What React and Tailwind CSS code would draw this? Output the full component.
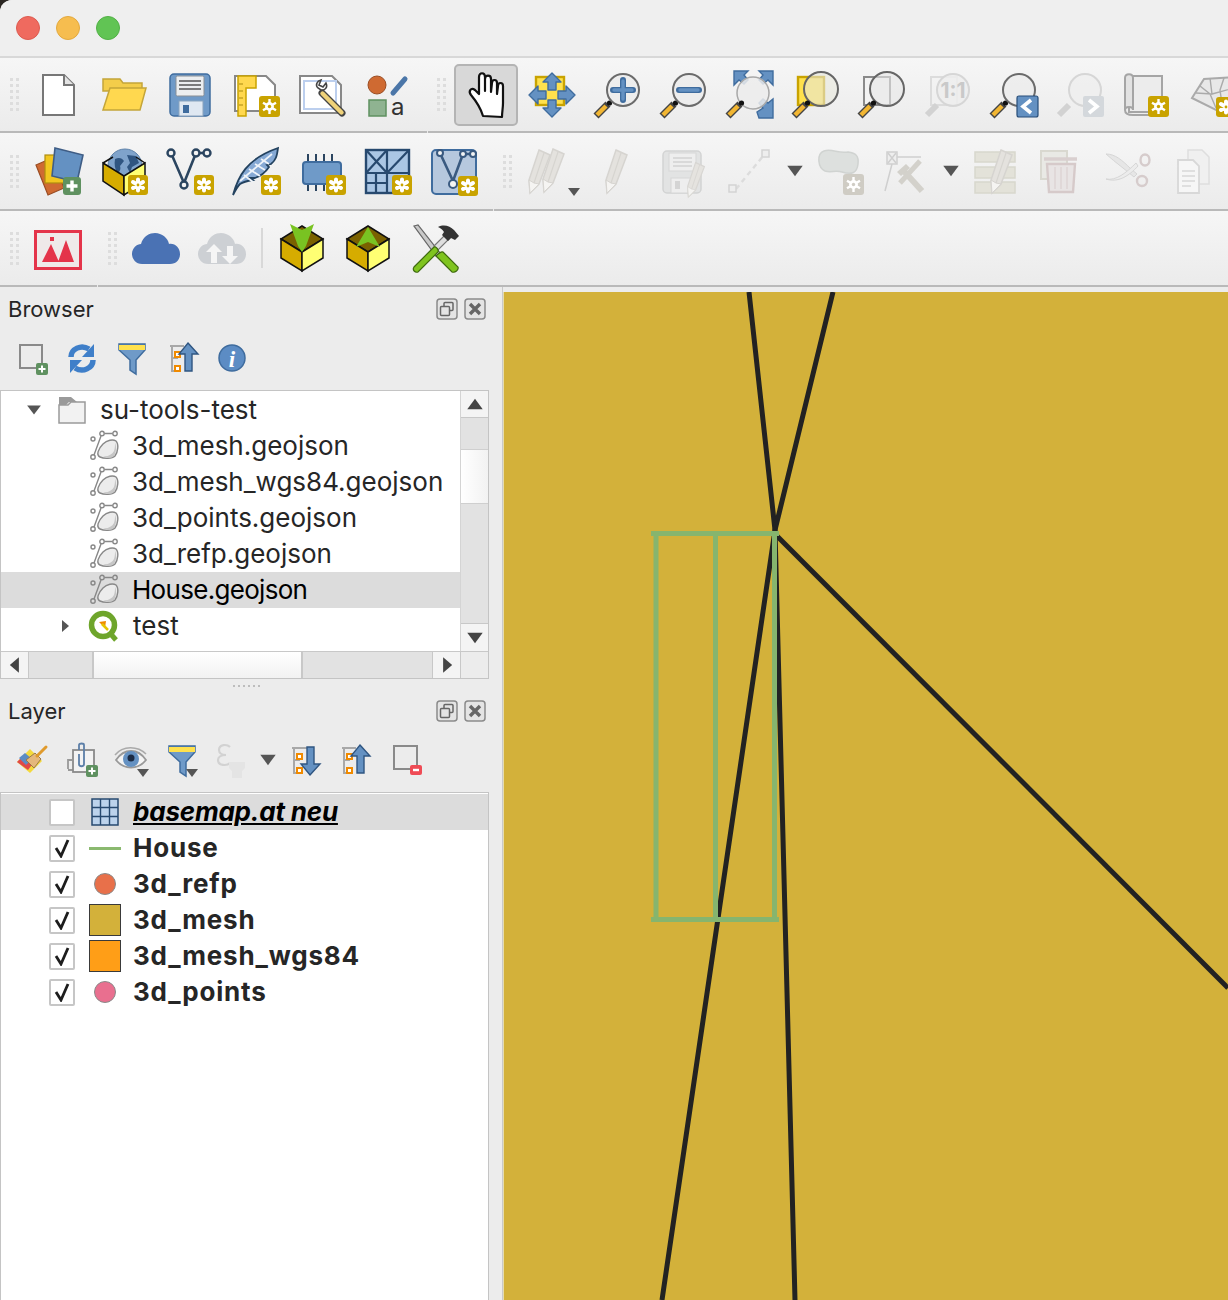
import React from "react";

const Svg = ({ children, size = 48, className = "" }) => (
  <svg width={size} height={size} viewBox={`0 0 ${size} ${size}`} className={`overflow-visible ${className}`}>
    {children}
  </svg>
);

// small badges
const StarBadge = ({ x = 27, y = 26, c = "#c9a300" }) => (
  <g transform={`translate(${x} ${y})`}>
    <rect width="20" height="20" rx="3" fill={c} />
    <g stroke="#fff" strokeWidth="4" strokeLinecap="round">
      <path d="M10 4.500v11M5 7l10 6M15 7L5 13" />
    </g>
    <circle cx="10" cy="10" r="1.400" fill={c} />
  </g>
);

const GearBadge = ({ x = 27, y = 26, c = "#c9a300" }) => (
  <g transform={`translate(${x} ${y})`}>
    <rect width="21" height="21" rx="3" fill={c} />
    <g stroke="#fff" strokeWidth="2.400">
      <path d="M10.500 3v15M4 6.700l13 7.500M17 6.700L4 14.200" />
    </g>
    <circle cx="10.500" cy="10.500" r="4.400" fill="#fff" />
    <circle cx="10.500" cy="10.500" r="1.700" fill={c} />
  </g>
);

const PlusBadge = ({ x = 27, y = 26 }) => (
  <g transform={`translate(${x} ${y})`}>
    <rect width="18" height="18" rx="3" fill="#5f9160" />
    <path d="M9 3.500v11M3.500 9h11" stroke="#fff" strokeWidth="3.400" />
  </g>
);

const Handle = () => (
  <g>
    <path d="M2 45l12-12" stroke="#444" strokeWidth="7" />
    <path d="M3 44l9-9" stroke="#f2b632" strokeWidth="4.400" />
    <circle cx="15.500" cy="32" r="2.600" fill="#111" />
  </g>
);

const Lens = ({ cx = 29, cy = 19, r = 16, fill = "#ececec", dim = false }) => (
  <g>
    {dim ? <path d="M3 44l10-10" stroke="#d2d2d2" strokeWidth="6" /> : <Handle />}
    <circle cx={cx} cy={cy} r={r} fill={fill} fillOpacity="0.85" stroke={dim ? "#d6d6d6" : "#6b6b6b"} strokeWidth="2" />
  </g>
);

const Arrow = ({ d = "down", size = 14, color = "#555" }) => {
  const pts = {
    down: "1,3 13,3 7,11",
    up: "1,11 13,11 7,3",
    left: "10,1 10,13 3,7",
    right: "4,1 4,13 11,7",
  };
  return (
    <svg width={size} height={size} viewBox="0 0 14 14">
      <polygon points={pts[d]} fill={color} />
    </svg>
  );
};

const Cube = ({ up }) => (
  <g>
    <path d="M24 2l21 13-21 13L3 15z" fill="#7a6100" stroke="#111" strokeWidth="1.500" />
    <path d="M3 15l21 13v19L3 34z" fill="#d6ac00" stroke="#111" strokeWidth="1.500" />
    <path d="M45 15L24 28v19l21-13z" fill="#ffff73" stroke="#111" strokeWidth="1.500" />
    {up ? (
      <path d="M24 3l12 20-12-5-12 5z" fill="#79c322" />
    ) : (
      <path d="M12 0l12 6 12-6-8 22-4 6-4-6z" fill="#79c322" />
    )}
  </g>
);

const GeoFile = () => (
  <Svg size={32}>
    <g fill="none" stroke="#888" strokeWidth="1.400">
      <circle cx="4" cy="27" r="2.200" />
      <circle cx="13" cy="3.500" r="2.200" />
      <circle cx="26" cy="3.500" r="2.200" />
      <circle cx="4" cy="9" r="2" />
      <path d="M5 25L12 6M15.500 3.500h8" />
    </g>
    <path d="M11 27c-4-2-2-8 3-13 4-4 10-5 13-3 3 3 2 11-1 15-3 3-11 3-15 1z" fill="#ececec" stroke="#888" strokeWidth="1.400" />
    <path d="M14 26c4 1 9-1 11-5 1-3 1-6 1-8 2 4 1 10-1 13-3 3-8 2-11 0z" fill="#c6c6c6" />
  </Svg>
);

const DockButtons = () => (
  <div className="flex gap-[6px]">
    <svg width="22" height="22" viewBox="0 0 22 22">
      <rect x="1" y="1" width="20" height="20" rx="3" fill="#e4e4e4" stroke="#8a8a8a" strokeWidth="1.500" />
      <rect x="8" y="4.500" width="9" height="8" rx="1" fill="none" stroke="#666" strokeWidth="1.500" />
      <rect x="4.500" y="8.500" width="9" height="9" rx="1" fill="#e4e4e4" stroke="#666" strokeWidth="1.500" />
    </svg>
    <svg width="22" height="22" viewBox="0 0 22 22">
      <rect x="1" y="1" width="20" height="20" rx="3" fill="#e4e4e4" stroke="#8a8a8a" strokeWidth="1.500" />
      <path d="M6 6l10 10M16 6L6 16" stroke="#666" strokeWidth="3.400" />
    </svg>
  </div>
);

const Grip = ({ className = "" }) => (
  <div className={`grid grid-cols-2 gap-x-[3px] gap-y-[3px] w-[9px] shrink-0 ${className}`}>
    {Array.from({ length: 12 }).map((_, i) => (
      <div key={i} className="w-[3px] h-[3px] bg-[#dddddd]" />
    ))}
  </div>
);

const Cell = ({ children, w = "w-[66px]" }) => (
  <div className={`${w} shrink-0 flex items-center justify-center`}>{children}</div>
);

const ToolbarLine = ({ at }) => (
  <div className="flex h-[2px]">
    <div className="bg-[#b9b9b9]" style={{ width: at }} />
    <div className="flex-1 ml-px bg-[#b9b9b9]" />
  </div>
);

// row 1 icons
const IconNew = () => (
  <Svg>
    <path d="M9 4h21l10 10v30H9z" fill="#fff" stroke="#777" strokeWidth="2" />
    <path d="M30 4v10h10" fill="#e4e4e4" stroke="#777" strokeWidth="2" />
  </Svg>
);
const IconOpen = () => (
  <Svg>
    <path d="M3 8h17l3 4h19v8H3z" fill="#f3cd4a" stroke="#c4a53a" strokeWidth="1.500" />
    <path d="M10 17h36l-6 22H3z" fill="#ffd84f" stroke="#c4a53a" strokeWidth="1.500" />
  </Svg>
);
const IconSave = () => (
  <Svg>
    <rect x="4" y="3" width="40" height="42" rx="4" fill="#6f9ac8" stroke="#3f6c9e" strokeWidth="1.500" />
    <rect x="10" y="5" width="28" height="20" rx="1.500" fill="#eceef0" stroke="#8a8f95" />
    <path d="M13 10h22M13 14h22M13 18h22" stroke="#555" strokeWidth="1.600" />
    <rect x="13" y="30" width="24" height="15" fill="#dfe8f2" stroke="#8aa3bd" />
    <rect x="17" y="34" width="6" height="8" fill="#3f6c9e" />
  </Svg>
);
const IconLayout = () => (
  <Svg>
    <path d="M3 5h31l9 9v26H3z" fill="#fff" stroke="#888" strokeWidth="2" />
    <path d="M6 5h18v12H14v28H6z" fill="#ffd84f" stroke="#c9a300" strokeWidth="1.500" />
    <path d="M7 13h4M7 20h4M7 27h4M7 34h4" stroke="#a98a10" strokeWidth="1.200" />
    <GearBadge x={27} y={25} />
  </Svg>
);
const IconManager = () => (
  <Svg>
    <path d="M2 5h32l9 9v28H2z" fill="#fff" stroke="#888" strokeWidth="2" />
    <rect x="6" y="10" width="32" height="28" fill="none" stroke="#bccfee" strokeWidth="2" />
    <path d="M20 17c-3-3-1-7 3-8l-2 5 4 2 3-4c2 4-1 8-5 7z" fill="#fff" stroke="#444" strokeWidth="1.600" />
    <path d="M24 22l20 20" stroke="#444" strokeWidth="7" strokeLinecap="round" />
    <path d="M24.500 22.500l19 19" stroke="#efd27a" strokeWidth="4.400" strokeLinecap="round" />
  </Svg>
);
const IconStyle = () => (
  <Svg>
    <circle cx="13" cy="14" r="9" fill="#cf6a32" stroke="#9a4d24" />
    <path d="M29 22l12-14" stroke="#4b76a8" strokeWidth="5" strokeLinecap="round" />
    <rect x="5" y="29" width="17" height="16" fill="#8fb391" stroke="#5f9160" strokeWidth="1.500" />
    <text x="27" y="44" fontSize="24" fill="#333" fontFamily="Inter, sans-serif">a</text>
  </Svg>
);
const IconHand = () => (
  <Svg>
    <path d="M21 45C19 38 14 30 9 24c-3-4 0-8 4-5l4 4V6c0-5 6-5 6 0v14V8c0-4.500 6-4.500 6 0v13l1-9c0-4 5-4 5 0v11l1-8c0-4 5-4 5 0v17c0 5-1 9-1 14z" fill="#fff" stroke="#111" strokeWidth="2.200" strokeLinejoin="round" />
  </Svg>
);
const IconPanSel = () => (
  <Svg>
    <rect x="8" y="6" width="28" height="28" fill="#ffe14d" stroke="#c9a300" strokeWidth="2.400" />
    <g fill="#6491c2" stroke="#3f6c9e" strokeWidth="1.400" strokeLinejoin="round">
      <path d="M24 2l9 9h-5v8h-8v-8h-5z" />
      <path d="M24 46l9-9h-5v-8h-8v8h-5z" />
      <path d="M1 24l9-9v5h8v8h-8v5z" />
      <path d="M47 24l-9-9v5h-8v8h8v5z" />
    </g>
  </Svg>
);
const IconZoomIn = () => (
  <Svg>
    <Lens />
    <path d="M29 9v20M19 19h20" stroke="#3f6c9e" strokeWidth="6" strokeLinecap="round" />
    <path d="M29 10v18M20 19h18" stroke="#6491c2" strokeWidth="3.400" strokeLinecap="round" />
  </Svg>
);
const IconZoomOut = () => (
  <Svg>
    <Lens />
    <path d="M19 19h20" stroke="#3f6c9e" strokeWidth="6" strokeLinecap="round" />
    <path d="M20 19h18" stroke="#6491c2" strokeWidth="3.400" strokeLinecap="round" />
  </Svg>
);
const IconZoomFull = () => (
  <Svg>
    <g fill="#6491c2" stroke="#3f6c9e" strokeWidth="1.400">
      <path d="M8 0h14l-4 4 4 5-4 4-5-4-5 5z" />
      <path d="M47 0H33l4 4-4 5 4 4 5-4 5 5z" />
      <path d="M47 47H33l-2-6 6-4-4-5 4-4 5 4 5-4z" />
    </g>
    <circle cx="27" cy="22" r="16" fill="#ececec" fillOpacity="0.85" stroke="#a8a8a8" strokeWidth="1.500" />
    <Handle />
  </Svg>
);
const IconZoomSel = () => (
  <Svg>
    <rect x="6" y="6" width="26" height="28" fill="#ffe14d" stroke="#c9a300" strokeWidth="2.400" />
    <circle cx="29" cy="18" r="17" fill="#e8e8dc" fillOpacity="0.6" stroke="#666" strokeWidth="2" />
    <Handle />
  </Svg>
);
const IconZoomLayer = () => (
  <Svg>
    <rect x="6" y="6" width="26" height="28" fill="#f2f2f2" stroke="#8a8a8a" strokeWidth="2" />
    <circle cx="29" cy="18" r="17" fill="#e8e8e8" fillOpacity="0.6" stroke="#666" strokeWidth="2" />
    <Handle />
  </Svg>
);
const IconZoom11 = () => (
  <Svg>
    <rect x="7" y="6" width="26" height="28" fill="none" stroke="#dcdcdc" strokeWidth="2" />
    <Lens cy={19} dim fill="#ededed" />
    <text x="29" y="27" textAnchor="middle" fontSize="21" fontWeight="700" fill="#c9c9c9" fontFamily="Inter, sans-serif">1:1</text>
  </Svg>
);
const IconZoomLast = () => (
  <Svg>
    <Lens />
    <rect x="27" y="25" width="21" height="21" rx="2" fill="#6491c2" stroke="#274d78" strokeWidth="1.200" />
    <path d="M41 29l-8 6.500 8 6.500" fill="none" stroke="#fff" strokeWidth="3.600" />
  </Svg>
);
const IconZoomNext = () => (
  <Svg>
    <Lens dim fill="#efefef" />
    <rect x="27" y="25" width="21" height="21" rx="2" fill="#d4d8dc" />
    <path d="M33 29l8 6.500-8 6.500" fill="none" stroke="#fff" strokeWidth="3.600" />
  </Svg>
);
const IconMapView = () => (
  <Svg>
    <path d="M7 5h33v36H7z" fill="#ececec" stroke="#a5a5a5" strokeWidth="2" />
    <path d="M3 7c0-5 8-5 8 0v32c0-4-8-4-8 0z" fill="#e2e2e2" stroke="#a5a5a5" strokeWidth="2" />
    <path d="M3 39c0 5 6 5 8 5h16" fill="none" stroke="#a5a5a5" strokeWidth="2" />
    <GearBadge x={26} y={25} />
  </Svg>
);
const Icon3DView = () => (
  <Svg>
    <path d="M4 27L16 8l30-2 2 26-18 8z" fill="#e8e8e8" stroke="#aaa" strokeWidth="2" />
    <path d="M12 15l10 8 6 14M22 7l2 16 22-6M36 7l-4 12 2 14M8 22l16 1" fill="none" stroke="#aaa" strokeWidth="1.400" />
    <StarBadge x={28} y={26} />
  </Svg>
);

// row 2 icons
const IconDataSource = () => (
  <Svg>
    <path d="M2 18l16-7 12 30-16 7z" fill="#cf6a32" stroke="#9a4d24" strokeWidth="1.200" />
    <rect x="11" y="8" width="20" height="28" fill="#f1c61f" stroke="#b08d10" strokeWidth="1.200" />
    <path d="M21 1l28 7-6 27-25-6z" fill="#6491c2" stroke="#3f5d85" strokeWidth="1.600" />
    <PlusBadge x={29} y={30} />
  </Svg>
);
const IconGeoPackage = () => (
  <Svg>
    <circle cx="25" cy="19" r="17" fill="#7fa3cb" stroke="#5f83aa" />
    <path d="M15 12c4-2 7-1 9 2l-4 5c1 3 0 6-3 7-2-4-3-9-2-14zM27 8l9 1 3 7-7 4-2 6-3-6 3-4z" fill="#2f5581" />
    <path d="M3 16l21 13v19L3 34z" fill="#d6ac00" stroke="#111" strokeWidth="1.500" />
    <path d="M45 16L24 29v19l21-13z" fill="#ffff73" stroke="#111" strokeWidth="1.500" />
    <path d="M3 16l10-6M45 16l-9-6" stroke="#111" strokeWidth="1.500" />
    <StarBadge x={28} y={28} />
  </Svg>
);
const IconShape = () => (
  <Svg>
    <path d="M5 6l13 30M18 36L30 6M30 6h10" stroke="#2b4560" strokeWidth="2.600" fill="none" />
    <g fill="#f4f4f4" stroke="#2b4560" strokeWidth="2.400">
      <circle cx="5" cy="6" r="3.500" />
      <circle cx="18" cy="38" r="3.500" />
      <circle cx="30" cy="6" r="3.500" />
      <circle cx="41" cy="6" r="3.500" />
    </g>
    <StarBadge x={28} y={28} />
  </Svg>
);
const IconFeather = () => (
  <Svg>
    <path d="M1 48C6 30 14 12 46 1c-1 8-2 12-7 16l-4 1 2 2c-4 6-8 9-14 11l-5 0 3 2c-6 1-10 2-13 4-3 3-5 7-7 11z" fill="#86a9d4" stroke="#23425f" strokeWidth="1.800" />
    <path d="M8 34L40 7M12 28l9 7M17 22l11 7M23 17l10 6M29 12l8 5" stroke="#eef3f9" strokeWidth="1.800" fill="none" />
    <StarBadge x={29} y={28} />
  </Svg>
);
const IconChip = () => (
  <Svg>
    <path d="M10 7v10M18 7v10M26 7v10M34 7v10M10 35v9M18 35v9M26 35v9" stroke="#2b4560" strokeWidth="2" />
    <rect x="5" y="15" width="38" height="22" rx="3" fill="#6f9ac8" stroke="#3f6c9e" strokeWidth="2" />
    <StarBadge x={28} y={28} />
  </Svg>
);
const IconMesh = () => (
  <Svg>
    <rect x="2" y="3" width="43" height="43" fill="#aac6e4" stroke="#27496f" strokeWidth="2.400" />
    <path d="M2 26h43M23 3v43M2 3l21 23M23 3L2 26M45 3L23 26M2 36h21M12 26v20" stroke="#27496f" strokeWidth="2.200" fill="none" />
    <StarBadge x={28} y={28} />
  </Svg>
);
const IconVirtual = () => (
  <Svg>
    <rect x="2" y="3" width="44" height="44" rx="4" fill="#b6c8de" stroke="#3f6c9e" strokeWidth="2" />
    <path d="M10 6l13 28M23 34L33 7M33 7h9" stroke="#3a5a80" strokeWidth="2.600" fill="none" />
    <g fill="#f4f4f4" stroke="#3a5a80" strokeWidth="2">
      <circle cx="23" cy="37" r="4" />
      <circle cx="33" cy="7" r="3" />
      <circle cx="43" cy="7" r="3" />
      <circle cx="10" cy="6" r="3" />
    </g>
    <StarBadge x={28} y={29} />
  </Svg>
);
const Pencil = ({ t = "" }) => (
  <g transform={t}>
    <path d="M12 2l11 5L12 36 3 45l-1-13z" fill="#e4e2de" stroke="#d6d4d0" strokeWidth="1.500" />
    <path d="M2 32l5 3 5 1-9 9z" fill="#f5f4f2" stroke="#d6d4d0" />
    <path d="M7 35L17 5" stroke="#d6d4d0" strokeWidth="1.200" />
  </g>
);
const IconEdits = () => (
  <Svg>
    <Pencil t="translate(-1 1)" />
    <Pencil t="translate(13 0)" />
  </Svg>
);
const IconToggleEdit = () => (
  <Svg>
    <Pencil t="translate(10 1)" />
  </Svg>
);
const IconSaveEdits = () => (
  <Svg className="opacity-90">
    <rect x="3" y="4" width="38" height="42" rx="4" fill="#e1e2e2" stroke="#d0d1d1" strokeWidth="1.500" />
    <rect x="9" y="6" width="27" height="18" fill="#eeeeee" stroke="#d4d4d4" />
    <path d="M13 11h19M13 15h19M13 19h19" stroke="#d0d0d0" strokeWidth="1.500" />
    <rect x="11" y="31" width="20" height="15" fill="#eeeeee" stroke="#d4d4d4" />
    <rect x="15" y="34" width="5" height="8" fill="#d2d2d2" />
    <Pencil t="translate(26 14) scale(0.8)" />
  </Svg>
);
const IconDigitize = () => (
  <Svg>
    <path d="M10 42L38 8" stroke="#dcdcdc" strokeWidth="2.400" strokeDasharray="5 4" />
    <rect x="3" y="38" width="7" height="7" fill="#eee" stroke="#d4d4d4" strokeWidth="1.500" />
    <rect x="36" y="3" width="7" height="7" fill="#eee" stroke="#d4d4d4" strokeWidth="1.500" />
  </Svg>
);
const IconPolygon = () => (
  <Svg>
    <path d="M8 4c8-3 14 3 24 1 8 1 11 4 10 12-1 9-6 11-16 8-7-2-11 1-17-1C2 21 0 7 8 4z" fill="#dde0de" stroke="#d0d3d1" strokeWidth="1.500" />
    <GearBadge x={27} y={27} c="#cfccc4" />
  </Svg>
);
const IconVertex = () => (
  <Svg>
    <rect x="5" y="5" width="10" height="12" fill="#eee" stroke="#cfcfcf" strokeWidth="1.500" />
    <path d="M6 6l8 10M14 6L6 16M15 10h24M10 17L3 44" stroke="#cfcfcf" strokeWidth="1.500" fill="none" />
    <path d="M18 36l20-22" stroke="#d3d1cb" strokeWidth="5" />
    <path d="M20 22l20 22" stroke="#d3d1cb" strokeWidth="6" />
    <path d="M15 25l9-8 4 4-9 8z" fill="#d3d1cb" />
  </Svg>
);
const IconAttrs = () => (
  <Svg>
    <g fill="#e3e2d9" stroke="#d8d7cd" strokeWidth="1.500">
      <rect x="3" y="5" width="40" height="10" />
      <rect x="3" y="20" width="40" height="11" />
      <rect x="3" y="35" width="40" height="11" />
    </g>
    <Pencil t="translate(17 1)" />
  </Svg>
);
const IconDelete = () => (
  <Svg>
    <rect x="3" y="4" width="26" height="28" fill="#e9e9e5" stroke="#d9d8d0" strokeWidth="2" />
    <path d="M6 12h33" stroke="#d9cfcf" strokeWidth="3.500" />
    <path d="M9 17h28l-2 28H11z" fill="#e8e4e4" stroke="#d6caca" strokeWidth="2.400" />
    <path d="M17 20v22M23 20v22M29 20v22" stroke="#ddd3d3" strokeWidth="1.500" />
  </Svg>
);
const IconCut = () => (
  <Svg>
    <path d="M2 7c9 0 16 6 25 15l6 5-3 3C22 23 12 16 2 7z" fill="#e6e6e6" stroke="#d6d6d6" />
    <path d="M2 32c10 2 20-6 30-16l2 3C25 29 14 36 2 32z" fill="#ececec" stroke="#d6d6d6" />
    <ellipse cx="41" cy="13" rx="4.500" ry="5.500" fill="none" stroke="#d6cccc" strokeWidth="2.400" />
    <ellipse cx="38" cy="34" rx="5" ry="5" fill="none" stroke="#d6cccc" strokeWidth="2.400" />
  </Svg>
);
const IconCopy = () => (
  <Svg>
    <path d="M18 3h14l7 7v27H18z" fill="#f0f0f0" stroke="#dedede" strokeWidth="1.500" />
    <path d="M8 13h15l6 6v27H8z" fill="#f6f6f6" stroke="#d8d8d8" strokeWidth="1.800" />
    <path d="M12 24h13M12 29h13M12 34h13M12 39h9" stroke="#d8d8d8" strokeWidth="1.500" />
  </Svg>
);

// row 3 icons
const IconElevation = () => (
  <Svg>
    <rect x="1.500" y="7.500" width="45" height="37" fill="#efe9e9" stroke="#e4344a" strokeWidth="3" />
    <path d="M8 38l9-18 8 18zM24 38l8-22 8 22z" fill="#e4344a" />
    <rect x="16" y="13" width="4" height="4" fill="#e4344a" />
  </Svg>
);
const IconCloud = ({ fill = "#4a72b4" }) => (
  <Svg>
    <path d="M10 40C4 40 0 35 0 30c0-6 5-10 9-10 2-8 9-11 14-11 7 0 13 5 14 11 6-1 11 4 11 10 0 6-4 10-10 10z" fill={fill} />
  </Svg>
);
const IconCloudSync = () => (
  <Svg>
    <path d="M10 40C4 40 0 35 0 30c0-6 5-10 9-10 2-8 9-11 14-11 7 0 13 5 14 11 6-1 11 4 11 10 0 6-4 10-10 10z" fill="#cdd0d4" />
    <path d="M16 20l8 8h-5v11h-6V28H8z" fill="#f5f5f5" />
    <path d="M32 40l8-8h-5V22h-6v10h-5z" fill="#f5f5f5" />
  </Svg>
);
const IconTools = () => (
  <Svg>
    <path d="M4 2l4-1 22 28-4 3z" fill="#c9c9c9" stroke="#666" strokeWidth="1.200" />
    <path d="M26 32c3-3 5-5 7-4l15 15c1 3-3 6-6 5L27 33z" fill="#7fc41f" stroke="#3f6a10" strokeWidth="1.200" />
    <path d="M24 22L38 8l4 4-14 14z" fill="#dedede" stroke="#777" strokeWidth="1.200" />
    <path d="M28 3c6-3 12-1 16 3l5 6-4 4-4-2-3 3-6-6 2-3c-2-3-4-4-6-5z" fill="#333" />
    <path d="M24 23L4 43c-2 3 1 6 4 5l20-20c1-2-2-6-4-5z" fill="#7fc41f" stroke="#3f6a10" strokeWidth="1.200" />
  </Svg>
);

// panel toolbar icons, 36 box
const PanelIcon = ({ children }) => (
  <svg width="36" height="36" viewBox="0 0 36 36" className="overflow-visible">
    {children}
  </svg>
);
const INewFolder = () => (
  <PanelIcon>
    <rect x="6" y="5" width="22" height="23" fill="none" stroke="#8a8a8a" strokeWidth="2" />
    <rect x="22" y="23" width="12" height="12" rx="2" fill="#5f9160" />
    <path d="M28 25.500v7M24.500 29h7" stroke="#fff" strokeWidth="2" />
  </PanelIcon>
);
const IRefresh = () => (
  <PanelIcon>
    <path d="M7 17c0-8 10-13 18-8" fill="none" stroke="#3f7fc9" strokeWidth="5.500" />
    <path d="M30 4v13H18z" fill="#3f7fc9" />
    <path d="M29 20c0 8-10 13-18 8" fill="none" stroke="#3f7fc9" strokeWidth="5.500" />
    <path d="M6 33V20h12z" fill="#3f7fc9" />
  </PanelIcon>
);
const IFilter = () => (
  <PanelIcon>
    <path d="M5 4h26v6L22 20v14l-6-4V20L5 10z" fill="#6f9ac8" stroke="#3f6c9e" strokeWidth="1.500" />
    <path d="M5 5h26v5H5z" fill="#ffe14d" />
  </PanelIcon>
);
const ICollapse = () => (
  <PanelIcon>
    <path d="M6 6h14M8 6v26M8 18h6M8 31h6" fill="none" stroke="#a8a8a8" strokeWidth="2" />
    <rect x="11" y="12" width="5" height="5" fill="#fff" stroke="#f08a00" strokeWidth="2" />
    <rect x="11" y="26" width="5" height="5" fill="#fff" stroke="#f08a00" strokeWidth="2" />
    <path d="M24 3l10 11h-6v17h-7V14h-6z" fill="#6491c2" stroke="#2f5581" strokeWidth="1.400" />
  </PanelIcon>
);
const IExpand = () => (
  <PanelIcon>
    <path d="M6 6h22M8 6v26M8 18h6M8 31h6" fill="none" stroke="#a8a8a8" strokeWidth="2" />
    <rect x="11" y="12" width="5" height="5" fill="#fff" stroke="#f08a00" strokeWidth="2" />
    <rect x="11" y="26" width="5" height="5" fill="#fff" stroke="#f08a00" strokeWidth="2" />
    <path d="M24 33l10-11h-6V5h-7v17h-6z" fill="#6491c2" stroke="#2f5581" strokeWidth="1.400" />
  </PanelIcon>
);
const IInfo = () => (
  <PanelIcon>
    <circle cx="18" cy="18" r="13" fill="#5c8cc4" stroke="#3f6c9e" strokeWidth="1.500" />
    <text x="18" y="27" textAnchor="middle" fontSize="23" fontWeight="700" fontStyle="italic" fontFamily="'Liberation Serif', serif" fill="#fff">i</text>
  </PanelIcon>
);
const IBrush = () => (
  <PanelIcon>
    <path d="M3 20L16 7l12 12-12 12z" fill="#f4d93c" />
    <path d="M3 20l6-6 11 6-6 8z" fill="#e04848" />
    <path d="M5 16l6-5 7 6-6 6z" fill="#5c8cc4" />
    <path d="M12 18l9-7 6 6-7 9z" fill="#e4b77c" stroke="#9a7a48" />
    <path d="M23 14l9-9" stroke="#e09a2c" strokeWidth="3" strokeLinecap="round" />
  </PanelIcon>
);
const IAddGroup = () => (
  <PanelIcon>
    <path d="M4 27v-9h4M4 28h8" fill="none" stroke="#999" strokeWidth="1.800" />
    <rect x="9" y="8" width="21" height="22" fill="#f3f3f3" stroke="#8a8a8a" strokeWidth="1.800" />
    <path d="M15 8V3c0-2 5-2 5 0v19c0 3-5 3-5 0V12" fill="none" stroke="#5c7fa8" strokeWidth="1.800" />
    <rect x="22" y="23" width="12" height="12" rx="2" fill="#5f9160" />
    <path d="M28 25.500v7M24.500 29h7" stroke="#fff" strokeWidth="2" />
  </PanelIcon>
);
const IEye = () => (
  <PanelIcon>
    <path d="M2 18c8-12 22-12 30 0-8 10-22 10-30 0z" fill="#f4f4f4" stroke="#999" strokeWidth="1.800" />
    <path d="M1 13C9 3 24 4 32 12" fill="none" stroke="#aaa" strokeWidth="1.500" />
    <circle cx="17" cy="17" r="8" fill="#6491c2" />
    <circle cx="17" cy="16" r="3.500" fill="#1b2b44" />
  </PanelIcon>
);
const IExprFilter = () => (
  <PanelIcon>
    <path d="M16 5c-3-3-11-3-11 3 0 3 3 5 7 5-5 0-8 2-8 5 0 6 9 6 12 3" fill="none" stroke="#d2d2d2" strokeWidth="2.200" />
    <path d="M15 20h16v6l-3 3v7h-10v-7l-3-3z" fill="#e4e4e4" />
  </PanelIcon>
);
const IRemove = () => (
  <PanelIcon>
    <rect x="5" y="4" width="23" height="23" fill="none" stroke="#8a8a8a" strokeWidth="2" />
    <rect x="21" y="23" width="12" height="10" rx="2" fill="#ef4b55" />
    <path d="M24 28h6" stroke="#fff" strokeWidth="2.400" />
  </PanelIcon>
);
const IRaster = () => (
  <svg width="28" height="28" viewBox="0 0 28 28">
    <rect x="1" y="1" width="26" height="26" fill="#bcd3ec" stroke="#27496f" strokeWidth="1.500" />
    <path d="M1 9.500h26M1 18.500h26M9.500 1v26M18.500 1v26" stroke="#27496f" strokeWidth="1.400" />
  </svg>
);
const IQgis = () => (
  <svg width="32" height="32" viewBox="0 0 32 32">
    <circle cx="15" cy="15" r="11.500" fill="none" stroke="#6ea52b" strokeWidth="5.500" />
    <path d="M21 22l7 8" stroke="#6ea52b" strokeWidth="5" />
    <path d="M11 12l7-1-1 7z" fill="#f08a00" />
    <path d="M14 14l6 6" stroke="#e6c400" strokeWidth="2.500" />
  </svg>
);
const IFolder = () => (
  <svg width="28" height="28" viewBox="0 0 28 28">
    <path d="M1 1h12l6 5h-8l-3 3H1z" fill="#9a9a9a" />
    <path d="M1 9h9l3-3h14v21H1z" fill="#f2f2f2" stroke="#9a9a9a" strokeWidth="1.500" />
  </svg>
);

const TOOL_FONT = "font-[Inter,'Noto_Sans',sans-serif]";

const BrowserRow = ({ name, active }) => (
  <div className={`flex items-center h-9 pl-[88px] ${active ? "bg-[#dcdcdc]" : ""}`}>
    <GeoFile />
    <span className={`ml-[11px] text-[26px] leading-9 whitespace-nowrap ${active ? "text-black tracking-[-0.7px]" : "text-[#262626]"}`}>{name}</span>
  </div>
);

const Check = ({ on }) => (
  <div className="w-[26px] h-[27px] bg-white border-2 border-[#c6c6c6] rounded-[2px] flex items-center justify-center shrink-0">
    {on && (
      <svg width="19" height="20" viewBox="0 0 19 20">
        <path d="M3 10l5 8 7-16" fill="none" stroke="#1d1d1d" strokeWidth="2.800" />
      </svg>
    )}
  </div>
);

const LayerRow = ({ on = true, symbol, name, selected }) => (
  <div className={`flex items-center h-9 pl-[48px] ${selected ? "bg-[#dcdcdc]" : ""}`}>
    <Check on={on} />
    <div className="w-[32px] h-[32px] ml-[14px] flex items-center justify-center shrink-0">{symbol}</div>
    <span className={`ml-[12px] text-[26px] leading-9 font-bold whitespace-nowrap ${selected ? "italic underline text-black tracking-[-0.2px]" : "text-[#262626] tracking-[0.8px]"}`}>
      {name}
    </span>
  </div>
);

const Dot = ({ color }) => (
  <div className="w-[22px] h-[22px] rounded-full border border-[#8a8a8a]" style={{ backgroundColor: color }} />
);
const Swatch = ({ color }) => (
  <div className="w-[32px] h-[32px] border border-[#3a3a3a]" style={{ backgroundColor: color }} />
);

const files = ["3d_mesh.geojson", "3d_mesh_wgs84.geojson", "3d_points.geojson", "3d_refp.geojson"];

export default function App() {
  return (
    <div className={`w-[1228px] h-[1300px] overflow-hidden bg-[#2a2622] ${TOOL_FONT}`}>
      <div className="h-full rounded-tl-[12px] overflow-hidden bg-[#ececec] flex flex-col">
        {/* title bar */}
        <div className="h-[58px] shrink-0 bg-[#efefef] border-b-2 border-[#d8d8d8] flex items-center gap-4 pl-4 pb-px">
          <div className="w-6 h-6 rounded-full bg-[#ef6a5f] border border-[#dd5b50]" />
          <div className="w-6 h-6 rounded-full bg-[#f6bd4f] border border-[#e3a93e]" />
          <div className="w-6 h-6 rounded-full bg-[#61c454] border border-[#52b146]" />
        </div>

        {/* toolbar 1 */}
        <div className="shrink-0 bg-gradient-to-b from-[#f6f6f6] to-[#ebebeb]">
          <div className="h-[73px] flex items-center">
            <Grip className="ml-[10px] mr-[6px]" />
            <Cell><IconNew /></Cell>
            <Cell><IconOpen /></Cell>
            <Cell><IconSave /></Cell>
            <Cell><IconLayout /></Cell>
            <Cell><IconManager /></Cell>
            <Cell><IconStyle /></Cell>
            <Grip className="ml-[16px] mr-[8px]" />
            <div className="w-[64px] h-[62px] shrink-0 flex items-center justify-center bg-[#d8d8d8] border-2 border-[#b4b4b4] rounded-[5px]">
              <IconHand />
            </div>
            <div className="flex ml-px">
              <Cell><IconPanSel /></Cell>
              <Cell><IconZoomIn /></Cell>
              <Cell><IconZoomOut /></Cell>
              <Cell><IconZoomFull /></Cell>
              <Cell><IconZoomSel /></Cell>
              <Cell><IconZoomLayer /></Cell>
              <Cell><IconZoom11 /></Cell>
              <Cell><IconZoomLast /></Cell>
              <Cell><IconZoomNext /></Cell>
              <Cell><IconMapView /></Cell>
              <Cell><Icon3DView /></Cell>
            </div>
          </div>
          <ToolbarLine at={427} />
        </div>

        {/* toolbar 2 */}
        <div className="shrink-0 bg-gradient-to-b from-[#f6f6f6] to-[#ebebeb]">
          <div className="h-[76px] flex items-center">
            <Grip className="ml-[10px] mr-[6px]" />
            <Cell><IconDataSource /></Cell>
            <Cell><IconGeoPackage /></Cell>
            <Cell><IconShape /></Cell>
            <Cell><IconFeather /></Cell>
            <Cell><IconChip /></Cell>
            <Cell><IconMesh /></Cell>
            <Cell><IconVirtual /></Cell>
            <Grip className="ml-[16px] mr-[7px]" />
            <div className="w-[66px] shrink-0 relative flex items-center justify-center">
              <IconEdits />
              <div className="absolute left-[48px] top-[38px]"><Arrow /></div>
            </div>
            <Cell><IconToggleEdit /></Cell>
            <Cell><IconSaveEdits /></Cell>
            <Cell><IconDigitize /></Cell>
            <Cell w="w-[24px]"><Arrow size={18} /></Cell>
            <Cell><IconPolygon /></Cell>
            <Cell><IconVertex /></Cell>
            <Cell w="w-[24px]"><Arrow size={18} /></Cell>
            <Cell><IconAttrs /></Cell>
            <Cell><IconDelete /></Cell>
            <Cell><IconCut /></Cell>
            <Cell><IconCopy /></Cell>
          </div>
          <ToolbarLine at={493} />
        </div>

        {/* toolbar 3 */}
        <div className="shrink-0 bg-gradient-to-b from-[#f6f6f6] to-[#ebebeb]">
          <div className="h-[74px] flex items-center">
            <Grip className="ml-[10px] mr-[6px]" />
            <Cell><IconElevation /></Cell>
            <Grip className="ml-[17px] mr-[15px]" />
            <Cell w="w-[48px]"><IconCloud /></Cell>
            <div className="w-[18px] shrink-0" />
            <Cell w="w-[48px]"><IconCloudSync /></Cell>
            <div className="w-[2px] h-[40px] ml-[15px] mr-[6px] bg-[#d8d8d8] shrink-0" />
            <Cell><Svg><Cube /></Svg></Cell>
            <Cell><Svg><Cube up /></Svg></Cell>
            <Cell><IconTools /></Cell>
          </div>
          <ToolbarLine at={97} />
        </div>

        <div className="flex-1 flex min-h-0">
          {/* left docks */}
          <div className="w-[502px] shrink-0 flex flex-col border-r border-[#c9c9c9] box-content">
            <div className="w-[489px] flex-1 flex flex-col min-h-0">
              <div className="h-[44px] shrink-0 flex items-center justify-between pl-2 pr-[3px]">
                <span className="text-[22px] text-[#262626]">Browser</span>
                <DockButtons />
              </div>
              <div className="h-[54px] mb-[5px] shrink-0 flex items-center pl-[14px] gap-[14px]">
                <INewFolder />
                <IRefresh />
                <IFilter />
                <ICollapse />
                <IInfo />
              </div>

              <div className="h-[289px] shrink-0 border border-[#c4c4c4] bg-white flex flex-col">
                <div className="flex-1 flex min-h-0">
                  <div className="flex-1 pt-px min-w-0">
                    <div className="flex items-center h-9 pl-[25px]">
                      <Arrow size={16} />
                      <div className="ml-[16px] shrink-0"><IFolder /></div>
                      <span className="ml-[14px] text-[26px] leading-9 text-[#262626]">su-tools-test</span>
                    </div>
                    {files.map((f) => (
                      <BrowserRow key={f} name={f} />
                    ))}
                    <BrowserRow name="House.geojson" active />
                    <div className="flex items-center h-9 pl-[57px]">
                      <Arrow d="right" size={14} />
                      <div className="ml-[16px] shrink-0"><IQgis /></div>
                      <span className="ml-[13px] text-[26px] leading-9 text-[#262626]">test</span>
                    </div>
                  </div>
                  {/* vertical scrollbar */}
                  <div className="w-[28px] shrink-0 flex flex-col border-l border-[#d4d4d4]">
                    <div className="h-[27px] flex items-center justify-center bg-[#f4f4f4] border-b border-[#c8c8c8]"><Arrow d="up" size={18} color="#444" /></div>
                    <div className="h-[32px] bg-[#e2e2e2] border-b border-[#cfcfcf]" />
                    <div className="h-[53px] bg-gradient-to-r from-white to-[#f2f2f2]" />
                    <div className="flex-1 bg-[#e2e2e2] border-t border-[#cfcfcf]" />
                    <div className="h-[28px] flex items-center justify-center bg-[#f4f4f4] border-t border-[#c8c8c8]"><Arrow d="down" size={18} color="#444" /></div>
                  </div>
                </div>
                {/* horizontal scrollbar */}
                <div className="h-[27px] shrink-0 flex border-t border-[#c8c8c8]">
                  <div className="w-[28px] flex items-center justify-center bg-[#f4f4f4] border-r border-[#c8c8c8]"><Arrow d="left" size={18} color="#444" /></div>
                  <div className="w-[65px] bg-[#e2e2e2] border-r-2 border-[#c8c8c8]" />
                  <div className="w-[207px] bg-gradient-to-b from-white to-[#f2f2f2]" />
                  <div className="flex-1 bg-[#e2e2e2] border-l-2 border-[#c8c8c8]" />
                  <div className="w-[28px] flex items-center justify-center bg-[#f4f4f4] border-l border-[#c8c8c8]"><Arrow d="right" size={18} color="#444" /></div>
                  <div className="w-[28px] bg-[#ececec] border-l border-[#c8c8c8]" />
                </div>
              </div>

              {/* splitter */}
              <div className="h-[13px] shrink-0 flex items-center justify-center gap-[3px] pl-[3px]">
                {Array.from({ length: 6 }).map((_, i) => (
                  <div key={i} className="w-[2px] h-[2px] bg-[#bdbdbd]" />
                ))}
              </div>

              <div className="h-[38px] shrink-0 flex items-center justify-between pl-2 pr-[3px]">
                <span className="text-[22px] text-[#262626]">Layer</span>
                <DockButtons />
              </div>
              <div className="h-[60px] mb-[2px] shrink-0 flex items-center pl-[14px]">
                <IBrush />
                <div className="ml-[14px]"><IAddGroup /></div>
                <div className="ml-[14px] relative">
                  <IEye />
                  <div className="absolute left-[22px] top-[24px]"><Arrow size={14} /></div>
                </div>
                <div className="ml-[14px] relative">
                  <IFilter />
                  <div className="absolute left-[21px] top-[24px]"><Arrow size={14} /></div>
                </div>
                <div className="ml-[14px]"><IExprFilter /></div>
                <div className="ml-[9px] w-[18px] flex justify-center"><Arrow size={18} /></div>
                <div className="ml-[9px]"><IExpand /></div>
                <div className="ml-[14px]"><ICollapse /></div>
                <div className="ml-[17px]"><IRemove /></div>
              </div>

              <div className="flex-1 border-x border-t border-[#c4c4c4] bg-white pt-px min-h-0">
                <LayerRow on={false} selected symbol={<IRaster />} name="basemap.at neu" />
                <LayerRow symbol={<div className="w-[32px] h-[3px] bg-[#8ab96f]" />} name="House" />
                <LayerRow symbol={<Dot color="#e8704a" />} name="3d_refp" />
                <LayerRow symbol={<Swatch color="#d3b13a" />} name="3d_mesh" />
                <LayerRow symbol={<Swatch color="#ff9e17" />} name="3d_mesh_wgs84" />
                <LayerRow symbol={<Dot color="#e96f8f" />} name="3d_points" />
              </div>
            </div>
          </div>

          {/* map canvas */}
          <div className="flex-1 min-w-0 pt-[5px]">
            <div className="h-full bg-[#d3b13a] border-l border-[#e6dcae]">
              <svg width="724" height="1008" viewBox="0 0 724 1008" className="block">
                <g fill="none" stroke="#222" strokeWidth="5">
                  <path d="M245 0L271 238L158 1008" />
                  <path d="M329 0L271 238L291 1008" />
                  <path d="M272 243L724 696" />
                </g>
                <g fill="none" stroke="#86b56e" strokeWidth="5">
                  <path d="M147 241.500H275M147 627.500H275" />
                  <path d="M152 241.500V627.500M211.500 241.500V627.500M270.500 241.500V627.500" />
                </g>
              </svg>
            </div>
          </div>
        </div>
      </div>
    </div>
  );
}
